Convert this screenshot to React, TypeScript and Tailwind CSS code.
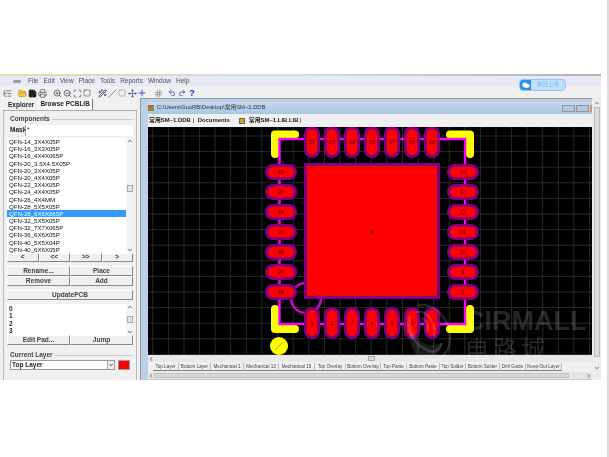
import React from 'react';
import { FolderOpen, Save, Printer, ZoomIn, ZoomOut, Maximize, Move, Plus, Hash, Undo2, Redo2, Wand2, Slash, Square, ChevronUp, ChevronDown, ChevronLeft, ChevronRight, Cloud, ListTree } from 'lucide-react';

const components = [
  'QFN-14_3X4X05P', 'QFN-16_3X3X05P', 'QFN-16_4X4X065P', 'QFN-20_3.5X4.5X05P', 'QFN-20_3X4X05P', 'QFN-20_4X4X05P',
  'QFN-22_3X4X05P', 'QFN-24_4X4X05P', 'QFN-26_4X4MM', 'QFN-28_5X5X05P', 'QFN-28_6X6X065P', 'QFN-32_5X5X05P',
  'QFN-32_7X7X065P', 'QFN-36_6X6X05P', 'QFN-40_5X5X04P', 'QFN-40_6X6X05P',
];

const layerTabs = [
  ['Top Layer', 'w-[26px]'], ['Bottom Layer', 'w-[32px]'], ['Mechanical 1', 'w-[33px]'], ['Mechanical 13', 'w-[35px]'],
  ['Mechanical 15', 'w-[36px]'], ['Top Overlay', 'w-[31px]'], ['Bottom Overlay', 'w-[35px]'], ['Top Paste', 'w-[26px]'],
  ['Bottom Paste', 'w-[33px]'], ['Top Solder', 'w-[26px]'], ['Bottom Solder', 'w-[34px]'], ['Drill Guide', 'w-[26px]'], ['Keep-Out Layer', 'w-[36px]'],
];

const Btn = ({ label, className = '' }: { label: string; className?: string }) => (
  <div className={`flex items-center justify-center bg-[#efefef] border-t border-l border-t-white border-l-white border-r border-b border-r-[#888] border-b-[#888] font-bold text-[#444] text-[6.5px] leading-none ${className}`}>
    {label}
  </div>
);

const ScrollV = ({ thumbClass }: { thumbClass: string }) => (
  <div className="w-[7px] shrink-0 bg-[#f4f4f4] flex flex-col items-center justify-between text-[#333]">
    <ChevronUp size={6} strokeWidth={3} />
    <div className={`w-[6px] bg-[#e3e3e3] border border-[#aaa] ${thumbClass}`} />
    <ChevronDown size={6} strokeWidth={3} />
  </div>
);

const ToolIcon = ({ children, className = '' }: { children: React.ReactNode; className?: string }) => (
  <span className={`w-[10px] h-[10px] flex items-center justify-center ${className}`}>{children}</span>
);

const Pad = ({ x, y, n, vertical }: { x: number; y: number; n: number; vertical: boolean }) => {
  const w = vertical ? 16 : 32;
  const h = vertical ? 32 : 16;
  const iw = vertical ? 10.5 : 26;
  const ih = vertical ? 26 : 10.5;
  return (
    <g>
      <rect x={x - w / 2} y={y - h / 2} width={w} height={h} rx={8} fill="#800080" />
      <rect x={x - iw / 2} y={y - ih / 2} width={iw} height={ih} rx={5.25} fill="#ff0000" />
      <text x={x} y={y + 2} fontSize="5.5" textAnchor="middle" fill="#400000">{n}</text>
    </g>
  );
};

// board is a free canvas, coords are page coords minus canvas origin (148,127)
const Board = () => {
  const ox = 148;
  const oy = 127;
  const topX = [432, 412, 392, 372, 352, 332, 312];
  const sideY = [172, 192, 212, 232, 252, 272, 292];
  return (
    <svg className="block w-[444px] h-[228px]" viewBox="0 0 444 228">
      <rect width="444" height="228" fill="#000" />
      {Array.from({ length: 29 }, (_, i) => (
        <line key={`v${i}`} x1={4.8 + i * 15.6} x2={4.8 + i * 15.6} y1="0" y2="228" stroke="#3a3a3a" strokeWidth="0.7" />
      ))}
      {Array.from({ length: 15 }, (_, i) => (
        <line key={`h${i}`} y1={9 + i * 15.6} y2={9 + i * 15.6} x1="0" x2="444" stroke="#3a3a3a" strokeWidth="0.7" />
      ))}
      <g transform={`translate(${-ox} ${-oy})`}>
        <circle cx="306" cy="298" r="15" fill="none" stroke="#d000d0" strokeWidth="2.6" />
        <g fill="none" stroke="#ffff00" strokeWidth="8" strokeLinecap="round" strokeLinejoin="round">
          <path d="M275 154 V134.5 H295" />
          <path d="M450 134.5 H470 V154" />
          <path d="M275 309 V329 H295" />
          <path d="M450 329 H470 V309" />
        </g>
        <rect x="279.5" y="139" width="185.5" height="185" fill="none" stroke="#ff00ff" strokeWidth="2.4" />
        <rect x="305.5" y="164.5" width="133" height="133" fill="#ff0000" stroke="#800080" strokeWidth="3" />
        <text x="372" y="234" fontSize="5.5" textAnchor="middle" fill="#400000">0</text>
        {topX.map((x, i) => <Pad key={`t${i}`} x={x} y={142} n={15 + i} vertical />)}
        {[...topX].reverse().map((x, i) => <Pad key={`b${i}`} x={x} y={323} n={i + 1} vertical />)}
        {sideY.map((y, i) => <Pad key={`l${i}`} x={281} y={y} n={22 + i} vertical={false} />)}
        {sideY.map((y, i) => <Pad key={`r${i}`} x={463} y={y} n={14 - i} vertical={false} />)}
        <circle cx="279" cy="346" r="9" fill="#ffff00" />
        <line x1="275" y1="350" x2="283" y2="342" stroke="#8a8a00" strokeWidth="0.7" />
      </g>
    </svg>
  );
};

const App = () => (
  <div className="relative w-[609px] h-[457px] bg-white overflow-hidden text-[#222] leading-none font-['Liberation_Sans',sans-serif] blur-[0.35px]">
    <div className="h-[74px]" />
    <div className="w-[601px] h-[306px] bg-[#f0f0f0] flex flex-col">
      <div className="h-[2px] bg-gradient-to-r from-[#e4dca8] via-[#cfdcec] to-[#b8b0b0]" />
      {/* menu bar */}
      <div className="h-[10px] bg-[#e6e9f6] flex items-center text-[6.5px] text-[#555] pl-[13px]">
        <span className="w-[8px] h-[3px] bg-[#999] rounded-sm mr-[7px]" />
        <div className="flex gap-[5px]">
          {['File', 'Edit', 'View', 'Place', 'Tools', 'Reports', 'Window', 'Help'].map(m => <span key={m}>{m}</span>)}
        </div>
        <div className="ml-auto mr-[35px] mt-[8px] flex items-center h-[12px] w-[47px] rounded-sm bg-[#bfe0fb] border border-[#8cc8f5] overflow-hidden">
          <span className="w-[11px] h-full bg-[#2e8fe8] flex items-center justify-center text-white"><Cloud size={8} fill="white" /></span>
          <span className="flex-1 text-center text-[5.5px] text-[#7fbcee] font-['Noto_Sans_CJK_SC',sans-serif]">拖拽上传</span>
        </div>
      </div>
      {/* toolbar */}
      <div className="h-[14px] flex items-center pl-[2px] text-[#333]">
        <ToolIcon className="text-[#555]"><ListTree size={9} /></ToolIcon>
        <ToolIcon className="ml-[5px] text-[#c79a1a]"><FolderOpen size={9} fill="#eecb55" /></ToolIcon>
        <ToolIcon className="text-black"><Save size={9} fill="#333" /></ToolIcon>
        <ToolIcon className="text-[#555]"><Printer size={9} /></ToolIcon>
        <ToolIcon className="ml-[5px] text-[#446]"><ZoomIn size={9} /></ToolIcon>
        <ToolIcon className="text-[#446]"><ZoomOut size={9} /></ToolIcon>
        <ToolIcon className="text-[#557]"><Maximize size={9} /></ToolIcon>
        <ToolIcon className="text-[#557]"><Square size={8} /></ToolIcon>
        <ToolIcon className="ml-[5px] text-[#225]"><Wand2 size={9} /></ToolIcon>
        <ToolIcon className="text-[#865]"><Slash size={9} /></ToolIcon>
        <ToolIcon className="text-[#99a]"><Square size={8} /></ToolIcon>
        <ToolIcon className="text-[#558]"><Move size={9} /></ToolIcon>
        <ToolIcon className="text-[#2040d0]"><Plus size={10} /></ToolIcon>
        <ToolIcon className="ml-[6px] text-[#888]"><Hash size={9} /></ToolIcon>
        <ToolIcon className="ml-[4px] text-[#2030b0]"><Undo2 size={8} /></ToolIcon>
        <ToolIcon className="text-[#2030b0]"><Redo2 size={8} /></ToolIcon>
        <span className="w-[10px] text-center text-[9px] font-bold text-[#2030c0]">?</span>
      </div>
      <div className="flex flex-1 min-h-0">
        {/* left panel */}
        <div className="w-[137px] shrink-0 pl-[3px] flex flex-col">
          <div className="h-[11px] flex items-end text-[6.5px] font-bold pl-[4px] gap-[3px] border-b border-[#aaa]">
            <span className="pb-[2px] px-[1px]">Explorer</span>
            <span className="h-[11px] px-[2px] bg-[#fafafa] border-r border-[#777] flex items-center">Browse PCBLIB</span>
          </div>
          <div className="flex-1 min-h-0 border-x border-[#bbb] px-[3px] flex flex-col">
            <div className="mt-[4px] h-[9px] text-[6.5px] font-bold flex items-center pl-[3px] gap-[2px] text-[#444]">
              Components<span className="flex-1 h-px bg-[#ccc]" />
            </div>
            <div className="mt-[1px] h-[11px] flex items-center text-[6.5px] font-bold pl-[3px]">
              <span className="w-[15px]">Mask</span>
              <span className="flex-1 h-full bg-white font-normal pl-px border-l border-[#999] flex items-center">*</span>
            </div>
            <div className="mt-[2px] h-[115px] bg-white flex overflow-hidden">
              <div className="flex-1">
                {components.map(c => (
                  <div key={c} className={`h-[7.2px] leading-[7.2px] pl-[2px] text-[6.1px] ${c === 'QFN-28_6X6X065P' ? 'bg-[#3399ff] text-[#dff]' : 'text-[#111]'}`}>{c}</div>
                ))}
              </div>
              <ScrollV thumbClass="h-[7px] mb-[14px]" />
            </div>
            <div className="h-[9px] grid grid-cols-4">
              {['<', '<<', '>>', '>'].map(l => <Btn key={l} label={l} />)}
            </div>
            <div className="mt-[4px] grid grid-cols-2 grid-rows-2 h-[20px]">
              {['Rename...', 'Place', 'Remove', 'Add'].map(l => <Btn key={l} label={l} />)}
            </div>
            <Btn label="UpdatePCB" className="mt-[4px] h-[10px]" />
            <div className="mt-[4px] h-[31px] bg-white flex overflow-hidden text-[6.5px] leading-[7.4px]">
              <div className="flex-1 pl-[2px] pt-[1px] font-bold">
                <div>0</div><div>1</div><div>2</div><div>3</div>
              </div>
              <ScrollV thumbClass="h-[7px]" />
            </div>
            <div className="grid grid-cols-2 h-[10px]">
              <Btn label="Edit Pad..." /><Btn label="Jump" />
            </div>
            <div className="mt-[6px] h-[9px] text-[6.5px] font-bold flex items-center pl-[3px] gap-[2px] text-[#444]">
              Current Layer<span className="flex-1 h-px bg-[#ccc]" />
            </div>
            <div className="flex items-center pl-[3px] gap-[3px]">
              <div className="w-[105px] h-[10px] bg-white border border-[#999] flex items-center text-[6.5px] font-bold pl-[1px]">
                <span className="flex-1">Top Layer</span>
                <span className="w-[7px] h-full bg-[#eee] border-l border-[#aaa] flex items-center justify-center"><ChevronDown size={6} strokeWidth={3} /></span>
              </div>
              <span className="w-[12px] h-[10px] bg-[#ff0000] border border-[#999]" />
            </div>
          </div>
        </div>
        {/* document area */}
        <div className="flex-1 min-w-0 ml-[3px] mt-[-2px] flex">
          <div className="w-[452px] shrink-0 bg-[#bcd0e8] border-l border-t border-[#9a9a9a] pl-[7px] pt-[3px] flex flex-col">
            <div className="h-[12px] flex items-center text-[5.8px] text-[#333] gap-[2px] bg-gradient-to-b from-[#c6d9ee] to-[#a9c4e4]">
              <span className="w-[6px] h-[6px] bg-gradient-to-br from-[#d33] to-[#3a3] mr-[1px]" />
              <span className="font-['Liberation_Sans','Noto_Sans_CJK_SC',sans-serif]">C:\Users\GuoRB\Desktop\常用SM~1.DDB</span>
              <div className="ml-auto flex gap-[1px]">
                <span className="w-[13px] h-[7px] bg-[#b8c6d6] border border-[#8899aa]" />
                <span className="w-[13px] h-[7px] bg-[#b8c6d6] border border-[#8899aa]" />
                <span className="w-[2px] h-[7px] bg-[#d89080]" />
              </div>
            </div>
            <div className="h-[13px] bg-[#f0f0f0] flex items-center text-[5.9px] font-bold pl-[1px] gap-[4px] font-['Liberation_Sans','Noto_Sans_CJK_SC',sans-serif]">
              <span className="pr-[2px] border-r border-[#888]">常用SM~1.DDB</span>
              <span className="pr-[2px]">Documents</span>
              <span className="w-[6px] h-[6px] bg-[#c8a830] border border-[#666] ml-[3px]" />
              <span className="pr-[2px] border-r border-[#888]">常用SM~1.LIB.LIB</span>
            </div>
            <div className="h-[228px] overflow-hidden"><Board /></div>
            <div className="h-[7px] bg-[#e8e8e8] flex items-center text-[#444]">
              <ChevronLeft size={6} strokeWidth={3} />
              <span className="ml-[214px] w-[7px] h-[5px] bg-[#d8d8d8] border border-[#aaa]" />
            </div>
            <div className="h-[10px] bg-[#f0f0f0] flex items-center pl-[5px] text-[4.6px] text-[#444] overflow-hidden whitespace-nowrap">
              {layerTabs.map(([name, w]) => (
                <span key={name} className={`${w} h-[8px] leading-[8px] text-center border-b border-[#777] border-r border-r-[#bbb] shrink-0`}>{name}</span>
              ))}
            </div>
            <div className="h-[7px] bg-[#e4e4e4] flex items-center text-[#444]">
              <ChevronLeft size={6} strokeWidth={3} />
              <span className="w-[415px] h-[5px] bg-[#d6d6d6] border border-[#c4c4c4]" />
              <ChevronRight size={6} strokeWidth={3} className="ml-auto" />
            </div>
          </div>
          {/* outer scroll bar */}
          <div className="flex-1 bg-[#ececec] flex flex-col items-center text-[#444]">
            <ChevronUp size={6} strokeWidth={3} className="mt-[2px]" />
            <span className="w-[6px] h-[250px] mt-[1px] bg-[#dcdcdc] border border-[#bbb]" />
            <ChevronDown size={6} strokeWidth={3} className="mt-[8px]" />
          </div>
        </div>
      </div>
    </div>
    <div className="absolute right-0 top-0 w-[2px] h-[457px] bg-[#dcdcdc]" />
    {/* watermark over the canvas */}
    <div className="absolute left-[465px] top-[308px] text-white/15 pointer-events-none">
      <div className="text-[27px] leading-[27px] font-bold">CIRMALL</div>
      <div className="mt-[1px] text-[24px] leading-[24px] tracking-[4px] font-['Noto_Sans_CJK_SC',sans-serif]">电路城</div>
    </div>
    <svg className="absolute left-[405px] top-[302px] w-[50px] h-[62px] pointer-events-none" viewBox="0 0 50 62" fill="none" stroke="white" strokeOpacity="0.14" strokeWidth="2.5">
      <path d="M12 4 C30 -2 50 22 44 44 C40 56 28 62 16 57" />
      <path d="M5 14 C0 28 8 42 24 49 C30 51 35 47 37 41" />
      <path d="M11 10 C22 8 31 20 29 34" />
      <path d="M16 16 C22 18 24 25 22 30" />
      <path d="M16 57 C6 50 2 36 5 14 C8 36 18 48 37 41 C36 52 26 60 16 57 Z" fill="white" fillOpacity="0.1" stroke="none" />
    </svg>
  </div>
);

export default App;
